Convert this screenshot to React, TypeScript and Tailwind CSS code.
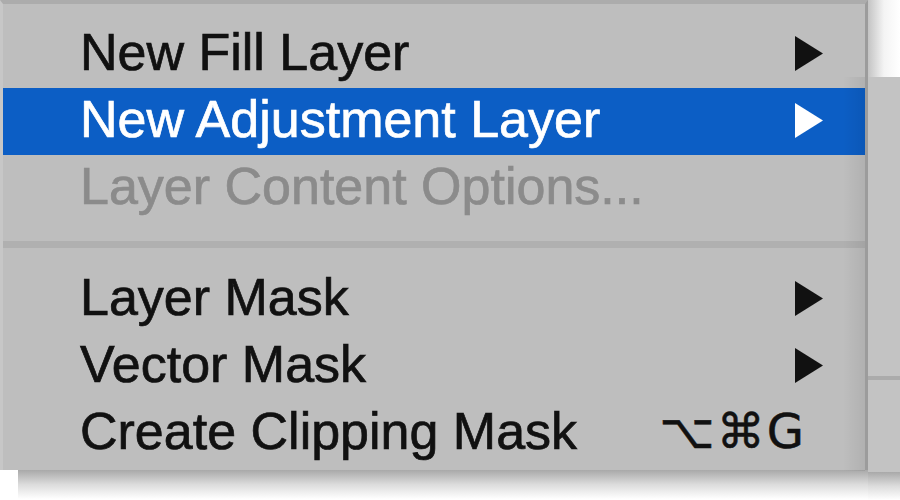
import React from "react";

type Item = {
  label: string;
  sub?: boolean;
  active?: boolean;
  disabled?: boolean;
  shortcut?: string;
};

const top: Item[] = [
  { label: "New Fill Layer", sub: true },
  { label: "New Adjustment Layer", sub: true, active: true },
  { label: "Layer Content Options...", disabled: true },
];

const bottom: Item[] = [
  { label: "Layer Mask", sub: true },
  { label: "Vector Mask", sub: true },
  { label: "Create Clipping Mask", shortcut: "⌥⌘G" },
];

function Arrow({ white }: { white?: boolean }) {
  return (
    <svg width="28" height="35" viewBox="0 0 28 35" className="shrink-0">
      <path d="M0 0 L28 17.5 L0 35 Z" fill={white ? "#ffffff" : "#111111"} />
    </svg>
  );
}

function Row({ item }: { item: Item }) {
  const text = item.active
    ? "text-white"
    : item.disabled
      ? "text-[#8b8b8b]"
      : "text-[#111111]";
  return (
    <div
      className={`flex h-[67px] items-center justify-between pl-[77px] pr-[42px] ${
        item.active ? "bg-[#0c5ec5]" : ""
      }`}
    >
      <span className={`pb-[5px] text-[52px] leading-none [-webkit-text-stroke:0.7px] ${text}`}>
        {item.label}
      </span>
      {item.sub && (
        <span className="pb-[3px]">
          <Arrow white={item.active} />
        </span>
      )}
      {item.shortcut && (
        <span
          className={`pb-[5px] pr-[17px] text-[48px] leading-none tracking-[2px] [-webkit-text-stroke:0.5px] ${text} font-['DejaVu_Sans','Liberation_Sans',sans-serif]`}
        >
          {item.shortcut}
        </span>
      )}
    </div>
  );
}

export default function App() {
  return (
    <div className="h-[500px] w-[900px] overflow-hidden bg-white font-['Liberation_Sans',Arial,sans-serif]">
      <div className="flex">
        {/* main menu */}
        <div className="relative w-[868px] shrink-0">
          <div className="border-t-[4px] border-l-[3px] border-r-[3px] border-t-[#acacac] border-l-[#c7c7c7] border-r-[#9c9c9c] bg-[#bebebe] pt-[17px] pb-[3px]">
            {top.map((i) => (
              <Row key={i.label} item={i} />
            ))}
            <div className="flex h-[44px] items-center">
              <div className="h-[7px] w-full bg-[#b0b0b0]" />
            </div>
            {bottom.map((i) => (
              <Row key={i.label} item={i} />
            ))}
          </div>
          {/* submenu shadow falling on the menu edge */}
          <div className="pointer-events-none absolute top-[77px] right-[3px] bottom-[29px] w-[22px] bg-gradient-to-r from-transparent to-[rgba(0,0,0,0.07)]" />
          {/* shadow under the menu */}
          <div className="ml-[18px] h-[29px] bg-gradient-to-b from-[#a9a9a9] via-[#dcdcdc] to-white" />
        </div>

        {/* submenu peeking out behind */}
        <div className="flex flex-1 flex-col">
          <div className="h-[77px] bg-gradient-to-r from-[#c4c4c4] via-[#f4f4f4] to-white" />
          <div className="h-[299px] bg-[#c3c3c3]" />
          <div className="h-[4px] bg-[#ababab]" />
          <div className="h-[92px] bg-[#c3c3c3]" />
          <div className="h-[28px] bg-gradient-to-b from-[#a9a9a9] via-[#dcdcdc] to-white" />
        </div>
      </div>
    </div>
  );
}
